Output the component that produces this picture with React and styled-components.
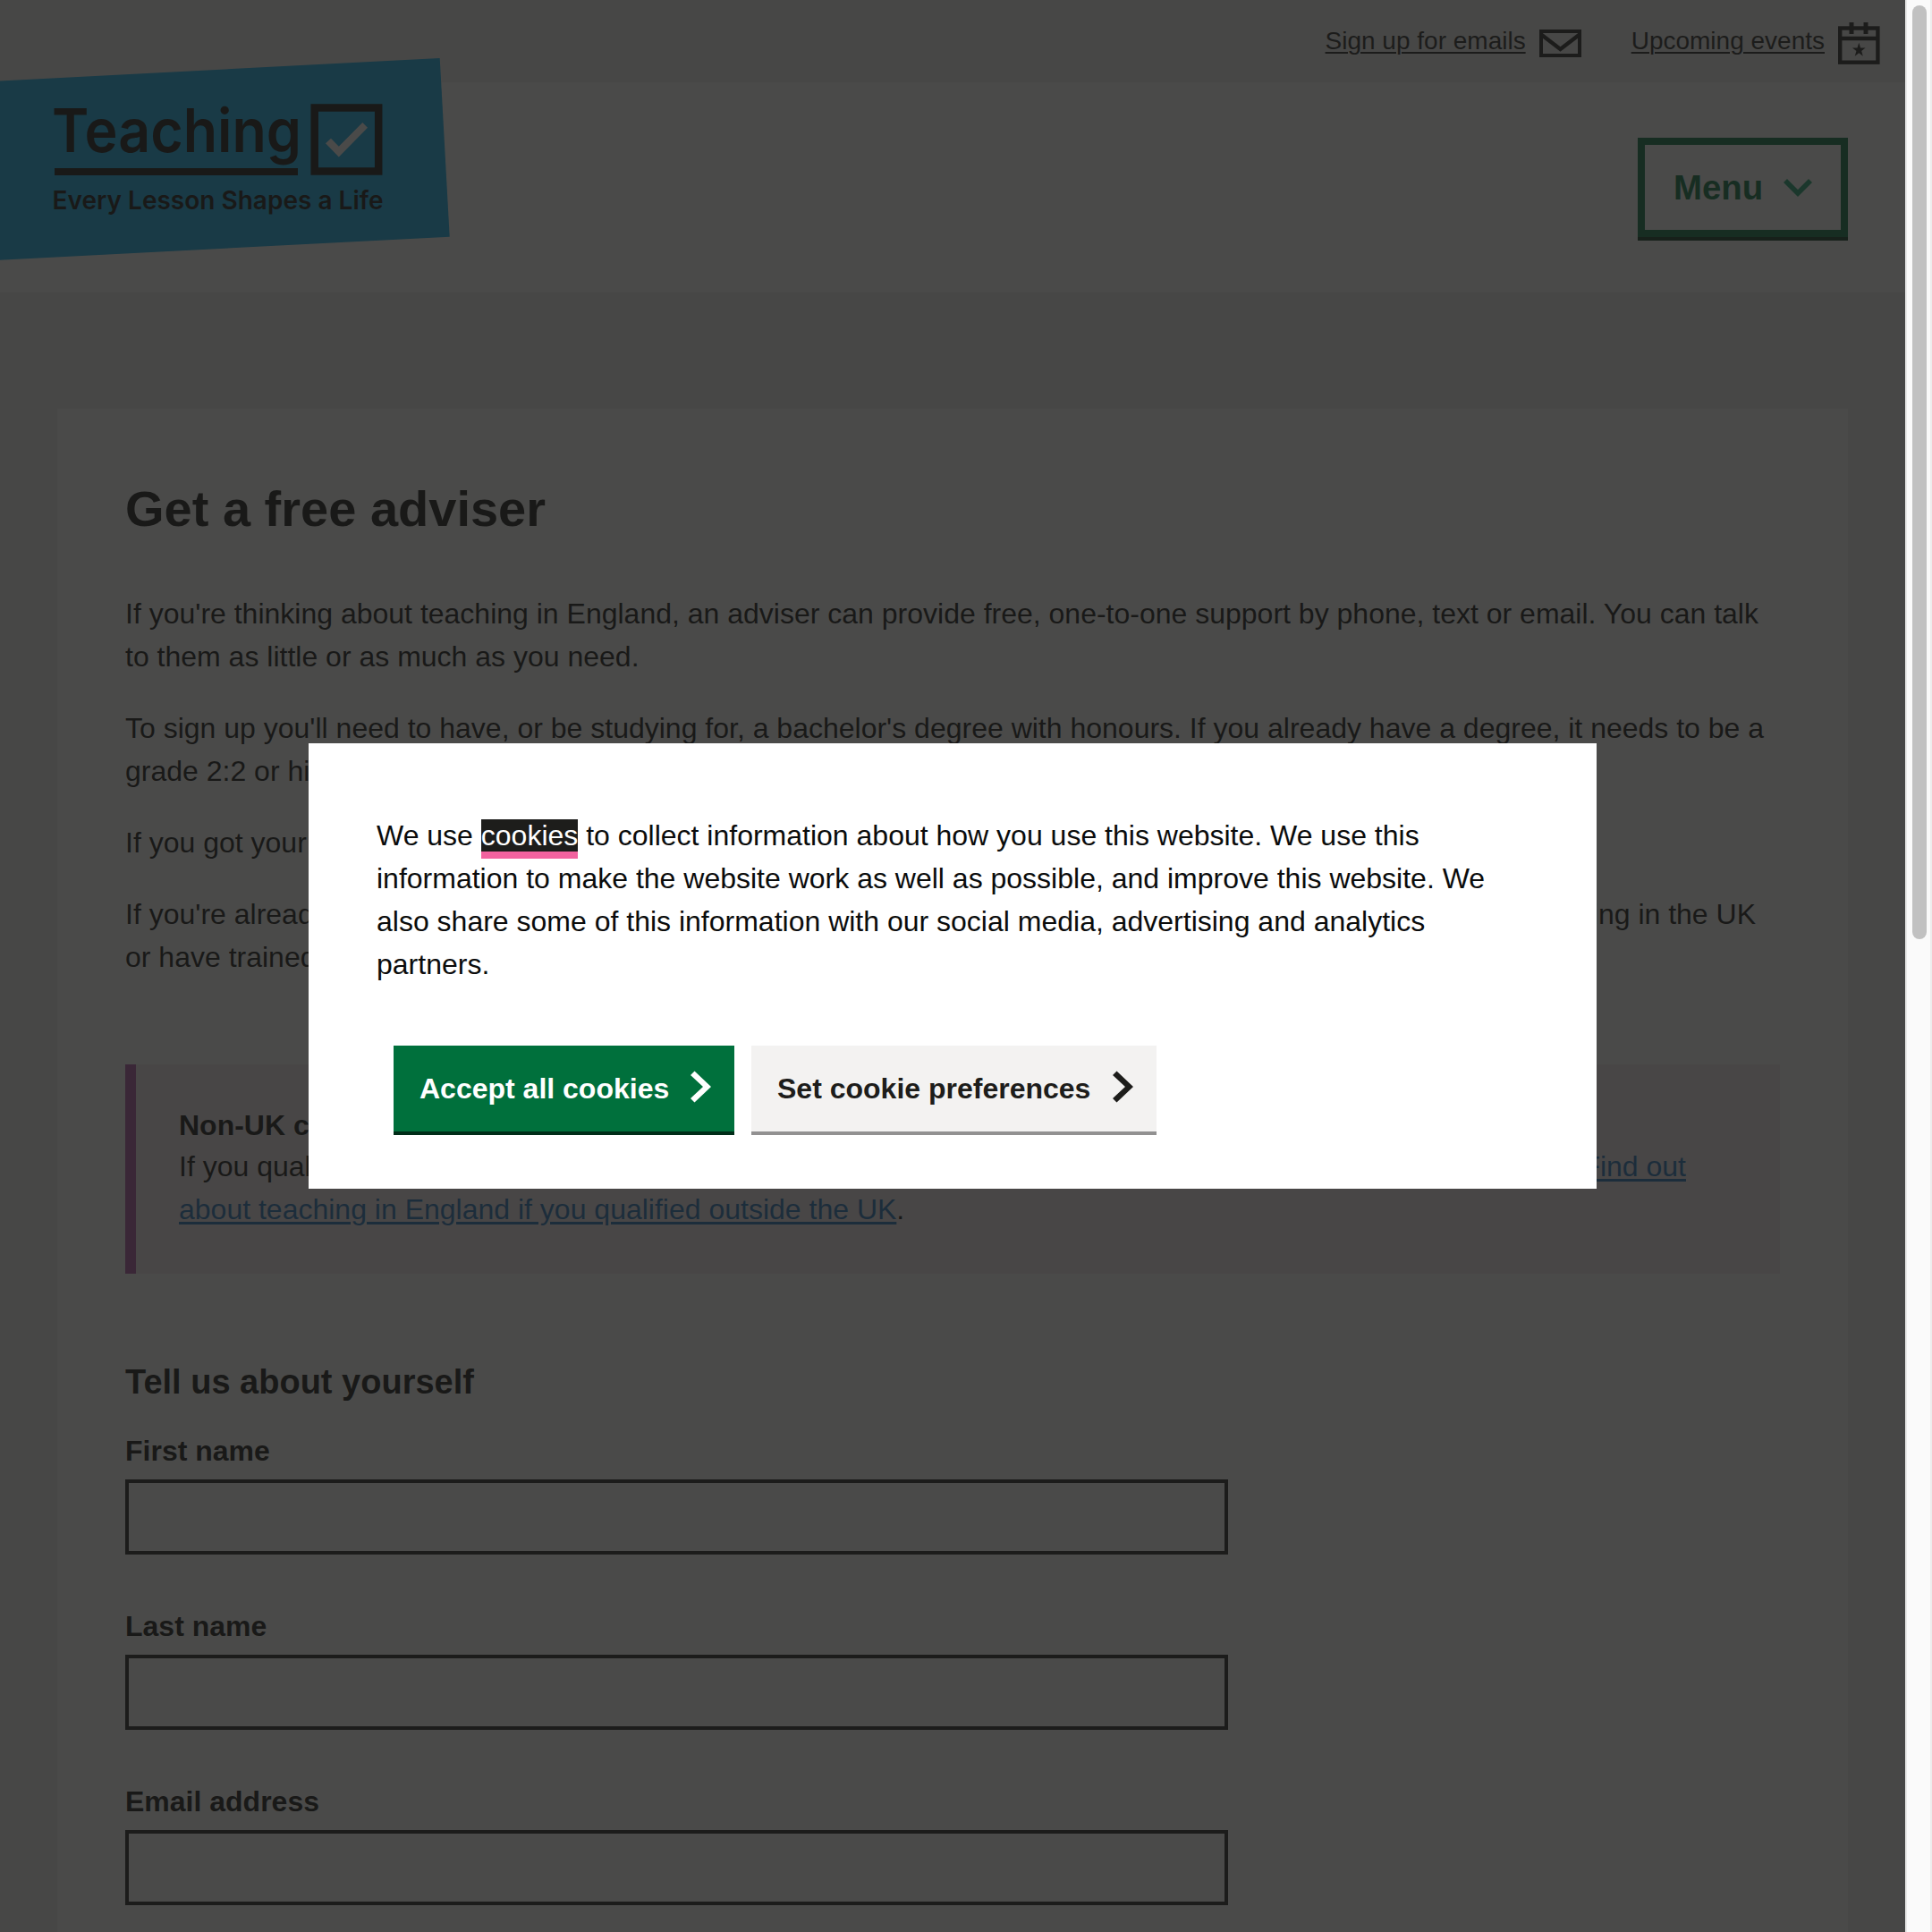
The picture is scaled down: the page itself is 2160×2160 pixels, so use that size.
import React from "react";
import styled, { createGlobalStyle, css } from "styled-components";

const GlobalStyle = createGlobalStyle`
  *, *::before, *::after { box-sizing: border-box; }
  html, body { margin: 0; padding: 0; overflow: hidden; }
  body {
    background: #f0f0f0;
    color: #0b0c0c;
    font-family: "Liberation Sans", Arial, Helvetica, sans-serif;
    font-size: 32px;
    line-height: 48px;
  }
`;

const Window = styled.div`
  display: flex;
  width: 2160px;
  height: 2160px;
  overflow: hidden;
`;

const Viewport = styled.div`
  position: relative;
  width: 2130px;
  height: 2160px;
  overflow: hidden;
  background: #f0f0f0;
`;

const ScrollTrack = styled.div`
  width: 30px;
  height: 2160px;
  padding: 6px 4px 0 6px;
  background: #fafafa;
  border-left: 2px solid #e8e8e8;
  border-right: 2px solid #ededed;
`;

const ScrollThumb = styled.div`
  width: 16px;
  height: 1044px;
  border-radius: 8px;
  background: #c1c1c1;
`;

const TopBar = styled.nav`
  display: flex;
  justify-content: flex-end;
  align-items: center;
  gap: 56px;
  height: 92px;
  padding: 0 28px 0 0;
`;

const TopLink = styled.a`
  display: flex;
  align-items: center;
  gap: 15px;
  height: 92px;
  color: #1d1d1b;

  svg { margin-top: 4px; }
`;

const TopLinkLabel = styled.span`
  font-size: 28px;
  line-height: 40px;
  text-decoration: underline;
  text-decoration-thickness: 2px;
  text-underline-offset: 3px;
`;

const Header = styled.header`
  display: flex;
  justify-content: flex-end;
  align-items: flex-start;
  height: 235px;
  padding: 62px 64px 0;
  background: #fff;
`;

const LogoLink = styled.a`
  position: absolute;
  left: 0;
  top: 60px;
  width: 510px;
  height: 236px;

  svg { display: block; }
`;

const MenuButton = styled.button`
  display: flex;
  align-items: center;
  justify-content: space-between;
  width: 235px;
  height: 111px;
  padding: 0 32px;
  background: transparent;
  border: 8px solid #00703c;
  box-shadow: 0 4px 0 #002d18;
  color: #00703c;
  font: bold 38.4px/48px "Liberation Sans", Arial, sans-serif;
`;

const Card = styled.main`
  margin: 130px 64px 0;
  padding: 0 76px;
  height: 1900px;
  background: #fff;
`;

const Title = styled.h1`
  margin: 0;
  padding-top: 80px;
  font-size: 56px;
  line-height: 64px;
`;

const Paragraph = styled.p`
  margin: 0 0 32px;
`;

const SpreadLine = styled.span`
  display: flex;
  justify-content: space-between;
  width: ${(p) => p.$width};
  white-space: nowrap;
`;

const Intro = styled.div`
  padding-top: 61px;
`;

const Inset = styled.section`
  height: 234px;
  margin-top: 96px;
  padding: 46px 48px 0;
  background: #f4ecf1;
  border-left: 12px solid #ad52a6;
`;

const InsetTitle = styled.h3`
  margin: 0;
  font-size: 32px;
  line-height: 44px;
`;

const InsetText = styled.p`
  margin: 0;
`;

const InlineLink = styled.a`
  color: #1d70b8;
  text-decoration: underline;
  text-decoration-thickness: 3px;
  text-underline-offset: 3px;
`;

const SectionTitle = styled.h2`
  margin: 97px 0 0;
  font-size: 38px;
  line-height: 48px;
`;

const FieldList = styled.div`
  padding-top: 29px;
`;

const Field = styled.label`
  display: block;
  height: 196px;
`;

const FieldLabel = styled.span`
  display: block;
  margin-bottom: 8px;
  font-weight: bold;
  line-height: 48px;
`;

const TextInput = styled.input`
  display: block;
  width: 1233px;
  height: 84px;
  padding: 8px;
  background: #fff;
  border: 4px solid #1d1d1b;
  border-radius: 0;
  outline: none;
`;

const Overlay = styled.div`
  position: absolute;
  inset: 0;
  display: flex;
  align-items: center;
  justify-content: center;
  background: rgba(29, 29, 27, 0.8);
`;

const Dialog = styled.section`
  width: 1440px;
  height: 498px;
  padding: 79px 76px 0;
  background: #fff;
`;

const DialogText = styled.p`
  width: 1250px;
  margin: 0;
`;

const FocusedLink = styled.a`
  background: #1d1d1b;
  box-shadow: 0 8px 0 #f2629f;
  color: #fff;
  text-decoration: none;
`;

const Actions = styled.div`
  display: flex;
  gap: 19px;
  padding: 67px 19px 0;
`;

const ActionButton = styled.button`
  display: flex;
  align-items: center;
  justify-content: space-between;
  height: 96px;
  width: ${(p) => p.$width};
  padding: 0 26px 0 29px;
  border: 0;
  font: bold 32px/40px "Liberation Sans", Arial, sans-serif;
  ${(p) =>
    p.$primary
      ? css`
          background: #00703c;
          color: #fff;
          box-shadow: 0 4px 0 #002d18;
        `
      : css`
          background: #f3f2f1;
          color: #1d1d1b;
          box-shadow: 0 4px 0 #929191;
        `}

  svg { margin-top: -5px; }
`;

function ChevronRight() {
  return (
    <svg width="23" height="36" viewBox="0 0 23 36" fill="currentColor">
      <path d="M4.5 0.5 L23 18 L4.5 35.5 L0 31 L14 18 L0 5 Z" />
    </svg>
  );
}

function ChevronDown() {
  return (
    <svg width="32" height="20" viewBox="0 0 32 20" fill="#14a06f">
      <path d="M0 4 L4 0 L16 12 L28 0 L32 4 L16 20 Z" />
    </svg>
  );
}

function EnvelopeIcon() {
  return (
    <svg width="47" height="31" viewBox="0 0 47 31" fill="none" stroke="currentColor" strokeWidth="4">
      <rect x="2" y="2" width="43" height="27" />
      <path d="M2 5.5 L23.5 22 L45 5.5" strokeWidth="4.5" />
    </svg>
  );
}

function CalendarIcon() {
  return (
    <svg width="47" height="47" viewBox="0 0 47 47" fill="none" stroke="currentColor" strokeWidth="4.4">
      <rect x="2.2" y="6.5" width="42.2" height="38.2" />
      <path d="M2 18 H45" />
      <path d="M15 0 V13 M31 0 V13" strokeWidth="5" />
      <path
        stroke="none"
        fill="currentColor"
        d="M23.3 22.7 L25.1 28.4 L30.6 28.4 L26.2 31.9 L27.8 37.7 L23.3 34.3 L18.8 37.7 L20.4 31.9 L16 28.4 L21.5 28.4 Z"
      />
    </svg>
  );
}

function Logo() {
  return (
    <svg width="510" height="236" viewBox="0 60 510 236" fontFamily="Inter, Liberation Sans, sans-serif">
      <path fill="#0aaeed" d="M0 90.5 L491.7 65 L502.7 264.7 L0 290.7 Z" />
      <g fill="#0b0c0c">
        <text x="58" y="170.3" fontSize="67" fontWeight="600" textLength="279" lengthAdjust="spacingAndGlyphs">
          Teaching
        </text>
        <rect x="61" y="188" width="272" height="8" />
        <text x="58.5" y="234.3" fontSize="28.6" fontWeight="600" textLength="370" lengthAdjust="spacingAndGlyphs">
          Every Lesson Shapes a Life
        </text>
      </g>
      <rect x="351.7" y="120.5" width="71.5" height="71" fill="none" stroke="#0b0c0c" strokeWidth="8.5" />
      <path d="M364 160.3 L370 154.8 L378.8 163.7 L405.3 137 L411 142.8 L378.8 175.5 Z" fill="#fff" />
    </svg>
  );
}

export default function App() {
  return (
    <>
      <GlobalStyle />
      <Window>
        <Viewport>
          <TopBar>
            <TopLink>
              <TopLinkLabel>Sign up for emails</TopLinkLabel>
              <EnvelopeIcon />
            </TopLink>
            <TopLink>
              <TopLinkLabel>Upcoming events</TopLinkLabel>
              <CalendarIcon />
            </TopLink>
          </TopBar>
          <Header>
            <LogoLink>
              <Logo />
            </LogoLink>
            <MenuButton>
              Menu
              <ChevronDown />
            </MenuButton>
          </Header>
          <Card>
            <Title>Get a free adviser</Title>
            <Intro>
              <Paragraph>
                If you're thinking about teaching in England, an adviser can provide free, one-to-one support by phone,
                text or email. You can talk
                <br />
                to them as little or as much as you need.
              </Paragraph>
              <Paragraph>
                To sign up you'll need to have, or be studying for, a bachelor's degree with honours. If you already
                have a degree, it needs to be a
                <br />
                grade 2:2 or higher.
              </Paragraph>
              <Paragraph>If you got your degree outside the UK, it must be equivalent.</Paragraph>
              <Paragraph>
                <SpreadLine $width="1823px">
                  <span>If you're already a qualified teacher, you can get an adviser if you have experience</span>
                  <span>of teaching in the UK</span>
                </SpreadLine>
                or have trained to teach.
              </Paragraph>
            </Intro>
            <Inset>
              <InsetTitle>Non-UK citizens</InsetTitle>
              <InsetText>
                <SpreadLine $width="1685px">
                  <span>If you qualified outside the UK, you can get help from a different service.</span>
                  <InlineLink>Find out</InlineLink>
                </SpreadLine>
                <InlineLink>about teaching in England if you qualified outside the UK</InlineLink>.
              </InsetText>
            </Inset>
            <SectionTitle>Tell us about yourself</SectionTitle>
            <FieldList>
              {["First name", "Last name", "Email address"].map((label) => (
                <Field key={label}>
                  <FieldLabel>{label}</FieldLabel>
                  <TextInput />
                </Field>
              ))}
            </FieldList>
          </Card>
          <Overlay>
            <Dialog>
              <DialogText>
                We use <FocusedLink>cookies</FocusedLink> to collect information about how you use this website. We use
                this information to make the website work as well as possible, and improve this website. We also share
                some of this information with our social media, advertising and analytics partners.
              </DialogText>
              <Actions>
                <ActionButton $primary $width="381px">
                  Accept all cookies
                  <ChevronRight />
                </ActionButton>
                <ActionButton $width="453px">
                  Set cookie preferences
                  <ChevronRight />
                </ActionButton>
              </Actions>
            </Dialog>
          </Overlay>
        </Viewport>
        <ScrollTrack>
          <ScrollThumb />
        </ScrollTrack>
      </Window>
    </>
  );
}
